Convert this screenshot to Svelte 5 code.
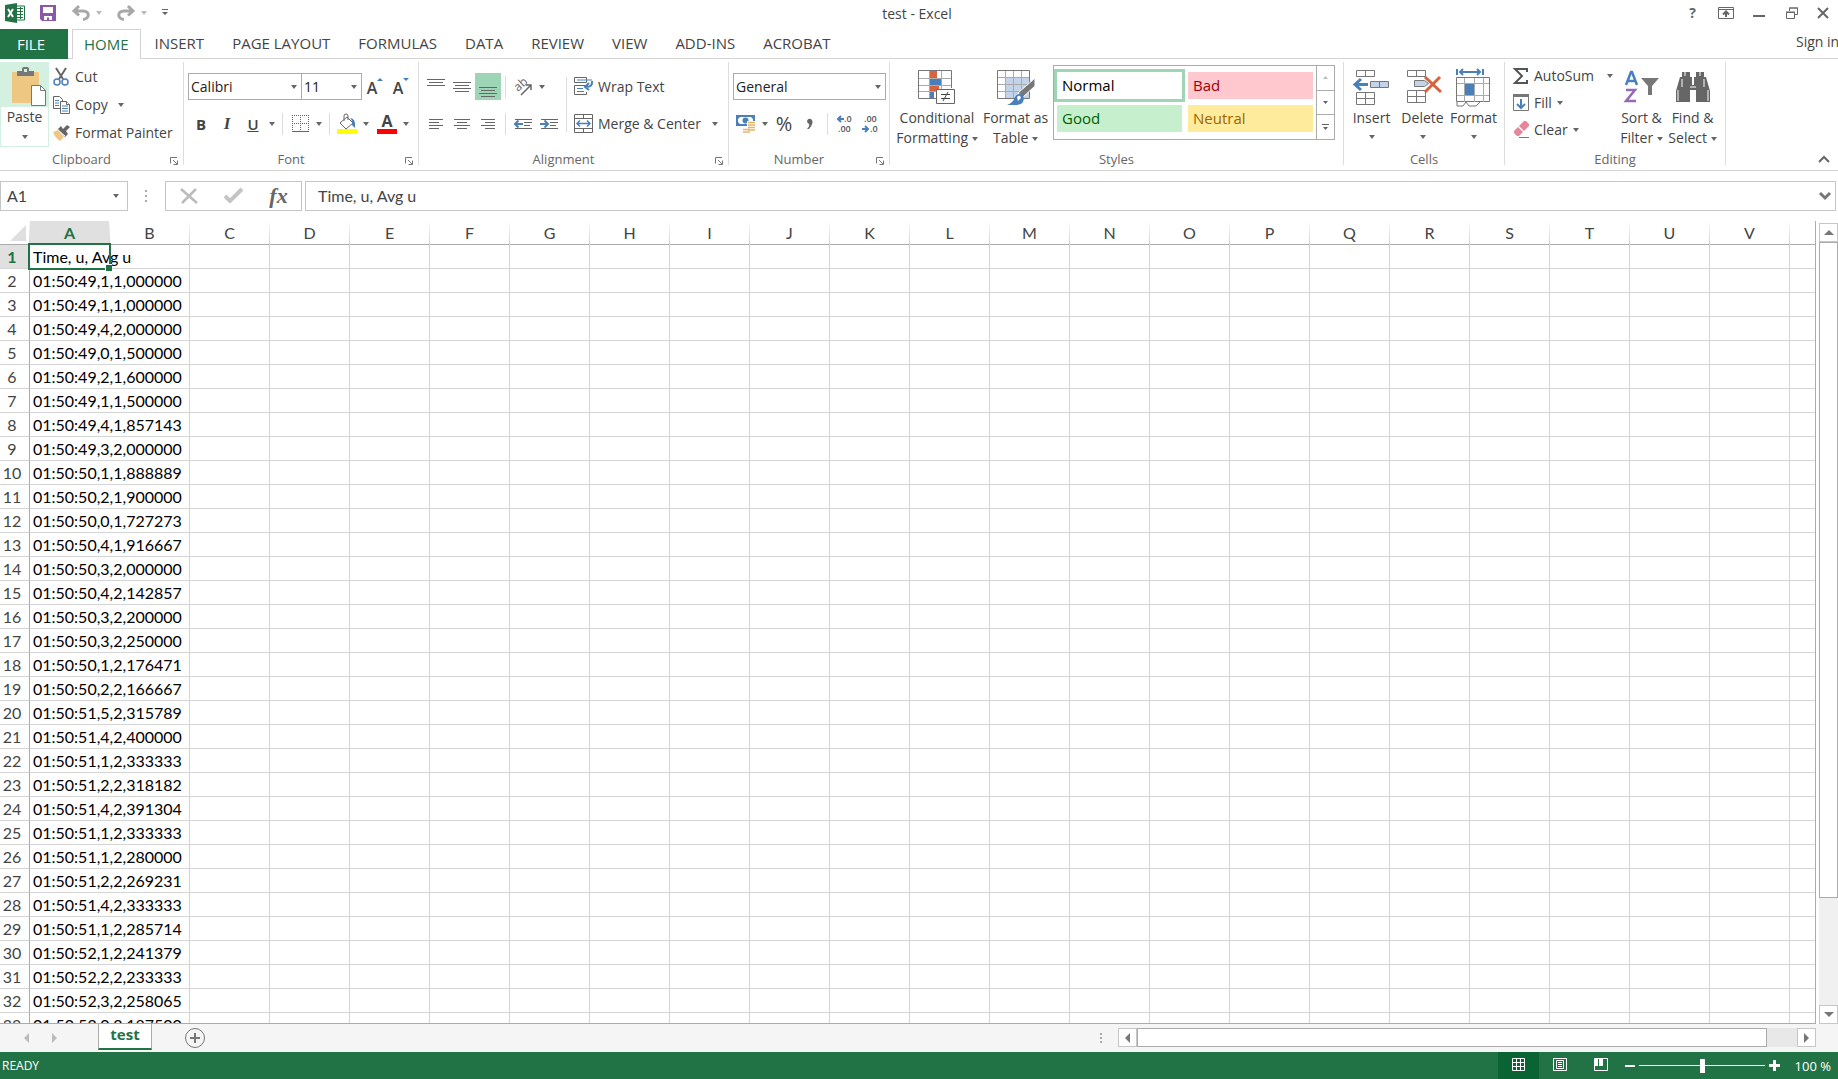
<script>
  const tabs = ['INSERT', 'PAGE LAYOUT', 'FORMULAS', 'DATA', 'REVIEW', 'VIEW', 'ADD-INS', 'ACROBAT'];

  const columns = 'ABCDEFGHIJKLMNOPQRSTUV'.split('');

  const rows = [
    'Time, u, Avg u',
    '01:50:49,1,1,000000',
    '01:50:49,1,1,000000',
    '01:50:49,4,2,000000',
    '01:50:49,0,1,500000',
    '01:50:49,2,1,600000',
    '01:50:49,1,1,500000',
    '01:50:49,4,1,857143',
    '01:50:49,3,2,000000',
    '01:50:50,1,1,888889',
    '01:50:50,2,1,900000',
    '01:50:50,0,1,727273',
    '01:50:50,4,1,916667',
    '01:50:50,3,2,000000',
    '01:50:50,4,2,142857',
    '01:50:50,3,2,200000',
    '01:50:50,3,2,250000',
    '01:50:50,1,2,176471',
    '01:50:50,2,2,166667',
    '01:50:51,5,2,315789',
    '01:50:51,4,2,400000',
    '01:50:51,1,2,333333',
    '01:50:51,2,2,318182',
    '01:50:51,4,2,391304',
    '01:50:51,1,2,333333',
    '01:50:51,1,2,280000',
    '01:50:51,2,2,269231',
    '01:50:51,4,2,333333',
    '01:50:51,1,2,285714',
    '01:50:52,1,2,241379',
    '01:50:52,2,2,233333',
    '01:50:52,3,2,258065',
    '01:50:52,0,2,187500'
  ];

  const cellStyles = ['Normal', 'Bad', 'Good', 'Neutral'];

  let formula = $state(rows[0]);
  let zoom = $state(50);
</script>

<svelte:head>
  <title>test - Excel</title>
</svelte:head>

{#snippet caret()}
  <svg class="caret" width="6" height="4" viewBox="0 0 6 4"><path d="M0 0h6L3 4z" fill="currentColor" /></svg>
{/snippet}

{#snippet launcher(name)}
  <button class="launcher" aria-label="{name} settings">
    <svg width="8" height="8" viewBox="0 0 8 8" fill="none" stroke="#777"><path d="M.5 6.500V.5H7M3 3l4 4M7.500 3.500v4h-4" /></svg>
  </button>
{/snippet}

{#snippet lines(widths, align)}
  <svg width="18" height="18" viewBox="0 0 18 18" stroke="#666">
    {#each widths as w, i}
      {@const x = align === 'left' ? 2 : align === 'right' ? 16 - w : 9 - w / 2}
      <path d="M{x} {4.5 + i * 3}h{w}" />
    {/each}
  </svg>
{/snippet}

<div class="app">
  <header class="titlebar">
    <div class="quick">
      <svg width="20" height="20" viewBox="0 0 20 20">
        <path d="M11 3h8.500v14H11z" fill="#fff" stroke="#217346" />
        <path d="M12 5.500h6M12 8.500h6M12 11.500h6M12 14.500h6M15.500 4v12" stroke="#217346" />
        <path d="M0 2l12-2v20L0 18z" fill="#217346" />
        <path d="M3 6l5 8M8 6l-5 8" stroke="#fff" stroke-width="2" />
      </svg>
      <button class="qbtn save" aria-label="Save">
        <svg width="16" height="16" viewBox="0 0 16 16"><path d="M0 0h16v16H2l-2-2z" fill="#8a57ab" /><path d="M3 2h10v6H3zM4 11h8v4H9v-2.500H7V15H4z" fill="#fff" /></svg>
      </button>
      <button class="qbtn undo" aria-label="Undo">
        <svg width="18" height="16" viewBox="0 0 18 16" fill="none" stroke="#a8a8a8" stroke-width="3"><path d="M7 1L2 6l5 4.500M2 6h9c7 0 7 8 0 8.500" /></svg>
        {@render caret()}
      </button>
      <button class="qbtn redo" aria-label="Redo">
        <svg width="18" height="16" viewBox="0 0 18 16" fill="none" stroke="#a8a8a8" stroke-width="3"><path d="M11 1l5 5-5 4.500M16 6H7c-7 0-7 8 0 8.500" /></svg>
        {@render caret()}
      </button>
      <button class="qbtn customize" aria-label="Customize Quick Access Toolbar">
        <svg width="6" height="7" viewBox="0 0 6 7"><path d="M0 0h6v1H0zM0 3h6L3 6z" fill="#666" /></svg>
      </button>
    </div>
    <h1>test - Excel</h1>
    <div class="window-buttons">
      <button aria-label="Help"><b>?</b></button>
      <button aria-label="Ribbon Display Options">
        <svg width="16" height="12" viewBox="0 0 16 12" fill="none" stroke="#666"><path d="M.5.5h15v11H.5zM0 2.500h16" /><path d="M8 10V5M5 7.500L8 4.500l3 3" stroke-width="2" /></svg>
      </button>
      <button aria-label="Minimize"><svg width="12" height="12" viewBox="0 0 12 12"><path d="M0 8h12v2H0z" fill="#666" /></svg></button>
      <button aria-label="Restore">
        <svg width="12" height="12" viewBox="0 0 12 12" fill="none" stroke="#666"><path d="M.5 5.500h8v6h-8zM0 5h9M3.500 4V1h8v6.500H9M3 1h9" /></svg>
      </button>
      <button aria-label="Close"><svg width="12" height="12" viewBox="0 0 12 12" stroke="#666" stroke-width="2"><path d="M1 1l10 10M11 1L1 11" /></svg></button>
    </div>
  </header>

  <nav class="tabs">
    <button class="file">FILE</button>
    <button class="tab active">HOME</button>
    {#each tabs as tab}
      <button class="tab">{tab}</button>
    {/each}
    <a class="signin" href="#signin">Sign in</a>
  </nav>

  <section class="ribbon">
    <div class="group clipboard">
      <div class="body">
        <button class="paste">
          <span class="paste-icon">
            <svg width="36" height="40" viewBox="0 0 36 40">
              <path d="M2 5h27v31H2z" fill="#eec883" />
              <path d="M7 9V4h5V1.500Q12 0 14 0h3q2 0 2 1.500V4h5v5zM14 2v3h3V2z" fill="#777" fill-rule="evenodd" />
              <path d="M21.500 18.500h9l5 5v15h-14z" fill="#fff" stroke="#777" /><path d="M30.500 18.500v5h5" fill="none" stroke="#777" />
            </svg>
          </span>
          <span>Paste</span>
          {@render caret()}
        </button>
        <div class="stack">
          <button class="line">
            <svg width="17" height="18" viewBox="0 0 17 18" fill="none">
              <path d="M3 0l7 11M13 0L6 11" stroke="#666" stroke-width="2" />
              <circle cx="4" cy="14" r="3" stroke="#4a80ba" stroke-width="1.500" /><circle cx="12" cy="14" r="3" stroke="#4a80ba" stroke-width="1.500" />
            </svg>
            Cut
          </button>
          <button class="line">
            <svg width="17" height="18" viewBox="0 0 17 18" fill="#fff" stroke="#666">
              <path d="M.5.5h6l3 3v9h-9z" /><path d="M2 4.500h4M2 7h4M2 9.500h4" stroke="#4a80ba" />
              <path d="M7.500 5.500h6l3 3v9h-9z" /><path d="M13.500 5.500v3h3" /><path d="M9 10h6M9 12.500h6M9 15h6" stroke="#4a80ba" />
            </svg>
            Copy {@render caret()}
          </button>
          <button class="line">
            <svg width="17" height="16" viewBox="0 0 17 16"><path d="M0 7l5-2 6 7-4 4Q2 13 0 7z" fill="#eec883" /><path d="M5 4l3-3 2 3 4-4 3 2-4 4 2 3-3 3z" fill="#666" /><path d="M6 6l6 5" stroke="#fff" /></svg>
            Format Painter
          </button>
        </div>
      </div>
      <footer class="launch">Clipboard {@render launcher('Clipboard')}</footer>
    </div>

    <div class="group font">
      <div class="body rows">
        <div class="row">
          <label class="combo family"><select aria-label="Font"><option>Calibri</option></select>{@render caret()}</label>
          <label class="combo size"><select aria-label="Font Size"><option>11</option></select>{@render caret()}</label>
          <button class="tool" aria-label="Increase Font Size"><span class="grow">A</span><svg width="6" height="18" viewBox="0 0 6 18"><path d="M0 3h6L3 0z" fill="#4a80ba" /></svg></button>
          <button class="tool" aria-label="Decrease Font Size"><span class="grow">A</span><svg width="6" height="18" viewBox="0 0 6 18"><path d="M0 0h6L3 3z" fill="#4a80ba" /></svg></button>
        </div>
        <div class="row">
          <button class="tool"><b>B</b></button>
          <button class="tool"><i>I</i></button>
          <button class="tool"><u>U</u></button>
          <button class="drop" aria-label="Underline options">{@render caret()}</button>
          <hr />
          <button class="tool" aria-label="Borders">
            <svg width="17" height="17" viewBox="0 0 17 17" fill="none" stroke="#666"><path d="M.5 0v15M8.500 0v15M16.500 0v15M0 .5h17M0 8.500h17" stroke-dasharray="1 1" /><path d="M0 16.500h17" /></svg>
          </button>
          <button class="drop" aria-label="Border options">{@render caret()}</button>
          <hr />
          <button class="tool" aria-label="Fill Color">
            <svg width="20" height="20" viewBox="0 0 20 20" fill="none"><path d="M0 15h20v5H0z" fill="#ff0" /><path d="M3 9l7-6 6 6-7 6zM7 7V2q0-2 2-2t2 2v4" stroke="#666" /><path d="M13 4q6 0 5 10l-3-3q1-4-2-7z" fill="#4a80ba" /></svg>
          </button>
          <button class="drop fill-drop" aria-label="Fill color options">{@render caret()}</button>
          <button class="tool color" aria-label="Font Color"><b>A</b></button>
          <button class="drop" aria-label="Font color options">{@render caret()}</button>
        </div>
      </div>
      <footer class="launch">Font {@render launcher('Font')}</footer>
    </div>

    <div class="group alignment">
      <div class="body">
        <div class="rows left">
          <div class="row">
            <button class="tool up" aria-label="Top Align">{@render lines([18, 14, 18], 'center')}</button>
            <button class="tool" aria-label="Middle Align">{@render lines([18, 14, 18, 14], 'center')}</button>
            <button class="tool down pressed" aria-label="Bottom Align">{@render lines([18, 14, 18, 14], 'center')}</button>
            <hr />
            <button class="tool" aria-label="Orientation">
              <svg width="20" height="18" viewBox="0 0 20 18" fill="none" stroke="#666" stroke-width="1.500">
                <text x="0" y="0" transform="translate(5 14) rotate(-42)" font-size="12" fill="#666" stroke="none">ab</text>
                <path d="M8 17L18 7M13 7h5v5" />
              </svg>
            </button>
            <button class="drop" aria-label="Orientation options">{@render caret()}</button>
          </div>
          <div class="row">
            <button class="tool" aria-label="Align Left">{@render lines([14, 10, 14, 10], 'left')}</button>
            <button class="tool" aria-label="Center">{@render lines([16, 10, 16, 10], 'center')}</button>
            <button class="tool" aria-label="Align Right">{@render lines([14, 10, 14, 10], 'right')}</button>
            <hr />
            <button class="tool" aria-label="Decrease Indent">
              <svg width="18" height="12" viewBox="0 0 18 12" fill="none"><path d="M1 1.500h17M10 4.500h8M10 7.500h6M1 10.500h17" stroke="#666" /><path d="M9 6H1M4.500 2.500L1 6l3.500 3.500" stroke="#4a80ba" stroke-width="2" /></svg>
            </button>
            <button class="tool" aria-label="Increase Indent">
              <svg width="18" height="12" viewBox="0 0 18 12" fill="none"><path d="M1 1.500h17M10 4.500h8M10 7.500h6M1 10.500h17" stroke="#666" /><path d="M0 6h8M4.500 2.500L8 6 4.500 9.500" stroke="#4a80ba" stroke-width="2" /></svg>
            </button>
          </div>
        </div>
        <hr class="tall" />
        <div class="rows">
          <button class="line">
            <svg width="20" height="19" viewBox="0 0 20 19" fill="none" stroke="#666">
              <path d="M.5.5h12v5H.5zM12 8.500H.5v9h12V15" /><path d="M3 3h15M3 11.500h6M3 14.500h7" stroke="#4a80ba" /><path d="M18 4q1 6-6 6M15 6l-4 4 4 3" stroke="#4a80ba" stroke-width="2" />
            </svg>
            Wrap Text
          </button>
          <button class="line">
            <svg width="20" height="19" viewBox="0 0 20 19" fill="none" stroke="#666">
              <path d="M.5.5h18v18H.5zM0 4.500h19M0 14.500h19M9.500 0v4M9.500 15v4" /><path d="M3 9.500h13M6 6.500l-3 3 3 3M13 6.500l3 3-3 3" stroke="#4a80ba" stroke-width="1.500" />
            </svg>
            Merge &amp; Center {@render caret()}
          </button>
        </div>
      </div>
      <footer class="launch">Alignment {@render launcher('Alignment')}</footer>
    </div>

    <div class="group number">
      <div class="body rows">
        <div class="row">
          <label class="combo format"><select aria-label="Number Format"><option>General</option></select>{@render caret()}</label>
        </div>
        <div class="row">
          <button class="tool" aria-label="Accounting Number Format">
            <svg width="20" height="20" viewBox="0 0 20 20" fill="none">
              <path d="M0 1h19v11H0z" fill="#4a80ba" /><path d="M4 3h11l2 2v3l-2 2H4L2 8V5z" fill="#fff" /><circle cx="9.500" cy="6.500" r="3" fill="#4a80ba" />
              <path d="M11 7h9v12h-5v1H6v-6h5z" fill="#fff" /><path d="M12 8.500h7M12 11h7M12 13.500h7M12 16h7M7 15.500h7M7 18h7" stroke="#e5b566" stroke-width="1.500" />
            </svg>
          </button>
          <button class="drop" aria-label="Accounting options">{@render caret()}</button>
          <button class="tool percent">%</button>
          <button class="tool comma" aria-label="Comma Style">
            <svg width="6" height="10" viewBox="0 0 6 10"><path d="M0 2Q1-1 4 0q4 3-2 10H0q3-3 2-5-2-1-2-3z" fill="#666" /></svg>
          </button>
          <hr />
          <button class="tool" aria-label="Increase Decimal">
            <svg width="18" height="20" viewBox="0 0 18 20" font-size="9" font-weight="600" fill="#555"><text x="8" y="8">.0</text><text x="2" y="18">.00</text><path d="M8 5H2M5 2L2 5l3 3" fill="none" stroke="#4a80ba" stroke-width="2" /></svg>
          </button>
          <button class="tool" aria-label="Decrease Decimal">
            <svg width="18" height="20" viewBox="0 0 18 20" font-size="9" font-weight="600" fill="#555"><text x="2" y="8">.00</text><text x="8" y="18">.0</text><path d="M0 15h6M3 12l3 3-3 3" fill="none" stroke="#4a80ba" stroke-width="2" /></svg>
          </button>
        </div>
      </div>
      <footer class="launch">Number {@render launcher('Number')}</footer>
    </div>

    <div class="group styles">
      <div class="body">
        <button class="big wide">
          <svg width="38" height="36" viewBox="0 0 38 36" fill="none">
            <path d="M11 1h8v7h-8zM11 15h10v6H11z" fill="#d9623e" /><path d="M11 8h12v7H11zM11 21h5v7h-5z" fill="#4a80ba" />
            <path d="M1 8.500h33M1 15.500h33M1 21.500h18M11.500 1v27M23.500 1v18" stroke="#aaa" /><path d="M18 28.500H.5V.5h33V18" stroke="#777" />
            <path d="M18.500 19.500h18v14h-18z" fill="#fff" stroke="#666" /><path d="M23 24.500h9M23 28.500h9M30 22l-5 9" stroke="#444" />
          </svg>
          <span>Conditional<br />Formatting {@render caret()}</span>
        </button>
        <button class="big medium">
          <svg width="38" height="36" viewBox="0 0 38 36" fill="none">
            <path d="M9 7h24v21H9z" fill="#c3d4ea" /><path d="M1 7.500h32M1 14.500h32M1 21.500h32M8.500 1v27M16.500 1v27M24.500 1v27" stroke="#aaa" /><path d="M.5.5h32v28H.5z" stroke="#777" />
            <path d="M38 8v8L26 27l-5-4z" fill="#777" stroke="#fff" /><path d="M10 35q6-2 8-8 3-5 8-2 3 9-6 10z" fill="#4a80ba" /><path d="M20 27q3-3 4 1l-3 3z" fill="#fff" />
          </svg>
          <span>Format as<br />Table {@render caret()}</span>
        </button>
        <div class="gallery">
          <div class="swatches">
            {#each cellStyles as style}
              <button class="swatch {style.toLowerCase()}">{style}</button>
            {/each}
          </div>
          <div class="spin">
            <button class="off" aria-label="Previous styles"><svg width="5" height="3" viewBox="0 0 5 3"><path d="M0 3h5L2.500 0z" fill="#bbb" /></svg></button>
            <button aria-label="Next styles"><svg width="5" height="3" viewBox="0 0 5 3"><path d="M0 0h5L2.500 3z" fill="#666" /></svg></button>
            <button aria-label="More styles"><svg width="7" height="7" viewBox="0 0 7 7"><path d="M0 0h7v1H0zM1 3h5L3.500 6z" fill="#666" /></svg></button>
          </div>
        </div>
      </div>
      <footer>Styles</footer>
    </div>

    <div class="group cells">
      <div class="body">
        <button class="big">
          <svg width="38" height="36" viewBox="0 0 38 36" fill="none" stroke="#777">
            <path d="M3.500.5h18v6h-18zM12.500 0v7M3.500 22.500h18v12h-18zM3 28.500h19M12.500 22v13" /><path d="M17.500 11.500h18v6h-18z" fill="#c3d4ea" /><path d="M26.500 11v7" />
            <path d="M15 14.500H2M8 9l-6 5.500L8 20" stroke="#4a80ba" stroke-width="3" />
          </svg>
          <span>Insert</span>
          {@render caret()}
        </button>
        <button class="big">
          <svg width="38" height="36" viewBox="0 0 38 36" fill="none" stroke="#777">
            <path d="M3.500.5h18v6h-18zM12.500 0v7M3.500 20.500h18v12h-18zM3 26.500h19M12.500 20v13" /><path d="M10.500 10.500h10l4 3-4 3h-10z" fill="#c3d4ea" />
            <path d="M21 7l16 15M36 7L21 22" stroke="#d9623e" stroke-width="3" />
          </svg>
          <span>Delete</span>
          {@render caret()}
        </button>
        <button class="big">
          <svg width="36" height="38" viewBox="0 0 36 38" fill="none" stroke="#777">
            <path d="M.5 8.500h33v24H.5zM1 33v4h6l3-4 3 4h7l4-4" /><path d="M1 14.500h32M1 26.500h32M8.500 9v24M18.500 9v24M27.500 9v24" stroke="#aaa" /><path d="M9 15h9v11H9z" fill="#4a80ba" stroke="none" />
            <path d="M1 0v6M27 0v6M4 3h20M7 0L4 3l3 3M21 0l3 3-3 3" stroke="#4a80ba" stroke-width="2" />
          </svg>
          <span>Format</span>
          {@render caret()}
        </button>
      </div>
      <footer>Cells</footer>
    </div>

    <div class="group editing">
      <div class="body">
        <div class="stack">
          <button class="line sum">
            <svg width="16" height="16" viewBox="0 0 16 16" fill="none" stroke="#555" stroke-width="2"><path d="M14 4V1H2l7 7-7 7h12v-3" /></svg>
            AutoSum {@render caret()}
          </button>
          <button class="line">
            <svg width="16" height="17" viewBox="0 0 16 17" fill="none"><path d="M.5.5h15v16H.5z" stroke="#777" /><path d="M0 0h16v3H0z" fill="#777" /><path d="M8 5v9M4 10l4 4 4-4" stroke="#4a80ba" stroke-width="2" /></svg>
            Fill {@render caret()}
          </button>
          <button class="line">
            <svg width="16" height="17" viewBox="0 0 16 17"><path d="M6 5l5-5h2l3 3v2l-5 5z" fill="#e5869a" /><path d="M5 6l5 5-4 4H4l-3-3v-2z" fill="#e5869a" /><path d="M6 16.500h10" stroke="#777" /></svg>
            Clear {@render caret()}
          </button>
        </div>
        <button class="big">
          <svg width="36" height="36" viewBox="0 0 36 36" fill="none">
            <path d="M2 15L7 2h1l5 13M4 11h7" stroke="#4a80ba" stroke-width="2.500" /><path d="M2 20h9L2 31h10" stroke="#9668b8" stroke-width="2.500" />
            <path d="M17 8h18l-7 8v9h-4v-9z" fill="#777" />
          </svg>
          <span>Sort &amp;<br />Filter {@render caret()}</span>
        </button>
        <button class="big">
          <svg width="36" height="36" viewBox="0 0 36 36">
            <path d="M7 2h8v5h2v8h2V7h2V2h8v5h2l4 14v11H21V20h-6v12H1V21L5 7h2z" fill="#666" /><path d="M10 2v4M25 2v4M7 9v8M29 9v8M3 20v11M33 20v11M15 17h6" stroke="#fff" />
          </svg>
          <span>Find &amp;<br />Select {@render caret()}</span>
        </button>
      </div>
      <footer>Editing</footer>
    </div>

    <button class="collapse" aria-label="Collapse the Ribbon">
      <svg width="12" height="8" viewBox="0 0 12 8" fill="none" stroke="#666" stroke-width="2"><path d="M1 7l5-5 5 5" /></svg>
    </button>
  </section>

  <div class="formulabar">
    <label class="namebox"><input value="A1" aria-label="Name Box" />{@render caret()}</label>
    <svg class="dots" width="2" height="12" viewBox="0 0 2 12" fill="#aaa"><path d="M0 0h2v2H0zM0 5h2v2H0zM0 10h2v2H0z" /></svg>
    <div class="fx">
      <button aria-label="Cancel"><svg width="18" height="16" viewBox="0 0 18 16" stroke="#bbb" stroke-width="2.500"><path d="M1 1l16 14M16 1L2 15" /></svg></button>
      <button aria-label="Enter"><svg width="19" height="16" viewBox="0 0 19 16" fill="none" stroke="#c4c4c4" stroke-width="4"><path d="M1 8l5 5L18 1" /></svg></button>
      <button class="fn">fx</button>
    </div>
    <label class="formula">
      <input bind:value={formula} aria-label="Formula Bar" />
      <svg width="12" height="9" viewBox="0 0 12 9" fill="none" stroke="#777" stroke-width="3"><path d="M1 2l5 5 5-5" /></svg>
    </label>
  </div>

  <main>
    <div class="grid">
      <table>
        <colgroup>
          <col class="numbers" />
          {#each columns as _}<col class="column" />{/each}
          <col />
        </colgroup>
        <thead>
          <tr>
            <th class="corner" aria-label="Select All"><svg width="16" height="16" viewBox="0 0 16 16"><path d="M16 0v16H0z" fill="#dfdfdf" /></svg></th>
            {#each columns as column, c}
              <th class:current={c === 0}>{column}</th>
            {/each}
            <th></th>
          </tr>
        </thead>
        <tbody>
          {#each rows as value, r}
            <tr>
              <th class:current={r === 0}>{r + 1}</th>
              <td class="filled">{value}{#if r === 0}<span class="cursor"></span>{/if}</td>
              {#each columns as _}<td></td>{/each}
            </tr>
          {/each}
        </tbody>
      </table>
    </div>
    <div class="vscroll">
      <button aria-label="Scroll up"><svg width="10" height="5" viewBox="0 0 10 5"><path d="M0 5h10L5 0z" fill="#777" /></svg></button>
      <div class="track"><div class="thumb"></div></div>
      <button aria-label="Scroll down"><svg width="10" height="5" viewBox="0 0 10 5"><path d="M0 0h10L5 5z" fill="#777" /></svg></button>
    </div>
  </main>

  <div class="sheetbar">
    <button class="nav" aria-label="Previous sheet"><svg width="5" height="10" viewBox="0 0 5 10"><path d="M5 0v10L0 5z" fill="#bbb" /></svg></button>
    <button class="nav" aria-label="Next sheet"><svg width="5" height="10" viewBox="0 0 5 10"><path d="M0 0v10l5-5z" fill="#bbb" /></svg></button>
    <button class="sheet">test</button>
    <button class="add" aria-label="New sheet">
      <svg width="20" height="20" viewBox="0 0 20 20" fill="none" stroke="#777"><circle cx="10" cy="10" r="9.500" /><path d="M10 5v10M5 10h10" stroke-width="2" /></svg>
    </button>
    <svg class="dots" width="2" height="10" viewBox="0 0 2 10" fill="#aaa"><path d="M0 0h2v2H0zM0 4h2v2H0zM0 8h2v2H0z" /></svg>
    <div class="hscroll">
      <button aria-label="Scroll left"><svg width="5" height="10" viewBox="0 0 5 10"><path d="M5 0v10L0 5z" fill="#777" /></svg></button>
      <div class="track"><div class="thumb"></div></div>
      <button aria-label="Scroll right"><svg width="5" height="10" viewBox="0 0 5 10"><path d="M0 0v10l5-5z" fill="#777" /></svg></button>
    </div>
  </div>

  <footer class="statusbar">
    <span class="ready">READY</span>
    <button class="view on" aria-label="Normal"><svg width="13" height="13" viewBox="0 0 13 13" fill="none" stroke="#fff"><path d="M.5.5h12v12H.5zM4.500 0v13M8.500 0v13M0 4.500h13M0 8.500h13" /></svg></button>
    <button class="view" aria-label="Page Layout"><svg width="14" height="13" viewBox="0 0 14 13" fill="none" stroke="#fff"><path d="M.5.5h13v12H.5zM3.500 2.500h7v8h-7zM5 4.500h4M5 6.500h4M5 8.500h4" /></svg></button>
    <button class="view" aria-label="Page Break Preview"><svg width="14" height="13" viewBox="0 0 14 13" fill="none" stroke="#fff"><path d="M.5.5h13v12H.5z" /><path d="M1 1h3v7H1zM5 1h4v7H5z" fill="#fff" stroke="none" /></svg></button>
    <button class="step" aria-label="Zoom Out"><svg width="10" height="10" viewBox="0 0 10 10"><path d="M0 4h10v2H0z" fill="#fff" /></svg></button>
    <input class="zoom" type="range" min="0" max="100" bind:value={zoom} aria-label="Zoom" />
    <button class="step" aria-label="Zoom In"><svg width="11" height="11" viewBox="0 0 11 11"><path d="M0 4h4V0h3v4h4v3H7v4H4V7H0z" fill="#fff" /></svg></button>
    <span class="percentage">100 %</span>
  </footer>
</div>

<style>
  :global(body) {
    margin: 0;
    overflow: hidden;
  }

  .app {
    display: flex;
    flex-direction: column;
    height: 100vh;
    overflow: hidden;
    background: #fff;
    color: #444;
    font-family: "Open Sans", "Noto Sans", sans-serif;
    font-size: 14px;
    line-height: 20px;
  }

  .app * {
    box-sizing: border-box;
  }

  svg {
    display: block;
    flex: none;
    overflow: visible;
  }

  button,
  input,
  select {
    margin: 0;
    padding: 0;
    border: 0;
    background: none;
    color: inherit;
    font: inherit;
  }

  button {
    display: flex;
    align-items: center;
    justify-content: center;
    white-space: nowrap;
  }

  hr {
    width: 1px;
    height: 22px;
    margin: 0 4px;
    border: 0;
    background: #ddd;
  }

  .caret {
    color: #666;
  }

  /* title bar */
  .titlebar {
    display: grid;
    grid-template-columns: 1fr auto 1fr;
    height: 29px;
    flex: none;
  }

  .quick {
    display: flex;
    align-items: center;
    padding: 0 0 4px 5px;
  }

  .qbtn {
    gap: 6px;
  }

  .qbtn .caret {
    color: #bbb;
  }

  .save {
    margin: 0 16px 0 15px;
  }

  .redo {
    margin-left: 15px;
  }

  .customize {
    margin-left: 15px;
  }

  h1 {
    margin: 0;
    padding-right: 4px;
    font-size: 14px;
    font-weight: 400;
    line-height: 28px;
  }

  .window-buttons {
    display: flex;
    justify-content: flex-end;
    padding-bottom: 3px;
  }

  .window-buttons button {
    width: 33px;
    color: #666;
  }

  .window-buttons button:last-child {
    width: 30px;
  }

  /* tabs */
  .tabs {
    display: flex;
    height: 30px;
    flex: none;
    border-bottom: 1px solid #d4d4d4;
    font-size: 15px;
  }

  .file {
    width: 68px;
    height: 30px;
    margin-right: 4px;
    padding-right: 6px;
    background: #217346;
    color: #fff;
  }

  .tab {
    padding: 0 14px 2px;
  }

  .tab.active {
    height: 30px;
    padding: 0 11px 2px;
    border: 1px solid #d4d4d4;
    border-bottom: 0;
    background: #fff;
    color: #217346;
  }

  .signin {
    width: 42px;
    margin-left: auto;
    overflow: hidden;
    color: #444;
    font-size: 14px;
    line-height: 26px;
    text-decoration: none;
    white-space: nowrap;
  }

  /* ribbon */
  .ribbon {
    display: flex;
    height: 112px;
    flex: none;
    padding: 3px 0 5px;
    border-bottom: 1px solid #d4d4d4;
  }

  .group {
    display: flex;
    flex-direction: column;
    border-right: 1px solid #ddd;
  }

  .body {
    display: flex;
    flex: 1;
  }

  .group footer {
    position: relative;
    height: 12px;
    flex: none;
    color: #666;
    font-size: 13px;
    line-height: 12px;
    text-align: center;
  }

  .group footer.launch {
    padding-right: 20px;
  }

  .launcher {
    position: absolute;
    right: 5px;
    bottom: 0;
  }

  .stack {
    display: flex;
    flex-direction: column;
  }

  .clipboard .stack {
    padding-top: 1px;
  }

  .line {
    gap: 5px;
    height: 28px;
    justify-content: flex-start;
  }

  .line .caret {
    margin-left: 5px;
  }

  .rows {
    display: flex;
    flex-direction: column;
    gap: 10px;
    padding-top: 11px;
  }

  .row {
    display: flex;
    align-items: center;
    height: 27px;
  }

  .tool {
    width: 26px;
    height: 27px;
    font-size: 15px;
  }

  .drop {
    width: 12px;
    height: 27px;
  }

  .clipboard {
    width: 184px;
  }

  .paste {
    flex-direction: column;
    justify-content: flex-start;
    width: 49px;
    height: 85px;
    margin-right: 4px;
    border: 1px solid #d3f0e0;
  }

  .paste-icon {
    display: flex;
    justify-content: center;
    width: 48px;
    height: 44px;
    padding: 4px 0 0 6px;
    background: #d3f0e0;
  }

  .paste .caret {
    margin-top: 8px;
  }

  .font {
    width: 235px;
  }

  .font .body {
    padding-left: 4px;
  }

  .combo {
    display: flex;
    align-items: center;
    height: 27px;
    padding-right: 4px;
    border: 1px solid #ababab;
    color: #222;
  }

  .combo select {
    flex: 1;
    min-width: 0;
    padding-left: 2px;
    appearance: none;
  }

  .family {
    width: 114px;
  }

  .size {
    width: 60px;
    border-left: 0;
  }

  .grow {
    padding-top: 2px;
    font-size: 16px;
    font-weight: 600;
    line-height: 20px;
  }

  .tool i {
    font-family: "Liberation Serif", serif;
    font-size: 17px;
    font-weight: 700;
  }

  .tool u {
    font-weight: 600;
  }

  .fill-drop {
    margin-right: 2px;
  }

  .color b {
    width: 20px;
    height: 20px;
    border-bottom: 5px solid #f00;
    font-size: 16px;
    line-height: 14px;
  }

  .alignment {
    width: 310px;
  }

  .alignment .body {
    padding-left: 4px;
  }

  .left {
    width: 143px;
  }

  .up {
    padding-bottom: 6px;
  }

  .down {
    padding-top: 10px;
  }

  .pressed {
    background: #9fd5b7;
  }

  .tall {
    height: 55px;
    margin: 15px 7px 0 0;
  }

  .alignment .line {
    height: 27px;
    gap: 4px;
  }

  .alignment .line .caret {
    margin-left: 7px;
  }

  .number {
    width: 161px;
  }

  .number .body {
    padding-left: 4px;
  }

  .format {
    width: 153px;
  }

  .percent {
    font-size: 20px;
  }

  .styles {
    width: 454px;
  }

  .styles .body {
    padding-left: 6px;
  }

  .big {
    flex-direction: column;
    justify-content: flex-start;
    width: 51px;
    padding-top: 6px;
  }

  .big svg:first-child {
    height: 40px;
  }

  .big span .caret {
    display: inline-block;
    vertical-align: middle;
  }

  .big > .caret {
    margin-top: 7px;
  }

  .wide {
    width: 82px;
  }

  .medium {
    width: 75px;
  }

  .gallery {
    display: flex;
    width: 282px;
    height: 75px;
    margin-top: 3px;
    border: 1px solid #ababab;
  }

  .swatches {
    display: grid;
    grid-template-columns: 125px 125px;
    grid-auto-rows: 27px;
    gap: 6px;
    flex: 1;
    padding: 6px 3px;
  }

  .swatch {
    justify-content: flex-start;
    padding: 0 0 2px 5px;
    color: #000;
    font-size: 15px;
  }

  .normal {
    outline: 3px solid #9fd5b7;
  }

  .bad {
    background: #ffc7ce;
    color: #9c0006;
  }

  .good {
    background: #c6efce;
    color: #006100;
  }

  .neutral {
    background: #ffeb9c;
    color: #9c6500;
  }

  .spin {
    display: flex;
    flex-direction: column;
    width: 18px;
    border-left: 1px solid #ababab;
  }

  .spin button {
    flex: 1;
  }

  .spin button + button {
    border-top: 1px solid #ababab;
  }

  .cells {
    width: 161px;
  }

  .cells .body {
    padding-left: 2px;
  }

  .editing {
    width: 221px;
  }

  .editing .body {
    padding-left: 8px;
  }

  .editing .stack {
    width: 103px;
  }

  .editing .line {
    height: 27px;
  }

  .editing .line .caret {
    margin-left: 0;
  }

  .editing .sum .caret {
    margin-left: 8px;
  }

  .collapse {
    margin: auto 8px 2px auto;
  }

  /* formula bar */
  .formulabar {
    display: flex;
    align-items: center;
    height: 50px;
    flex: none;
    padding: 0 2px 0 0;
  }

  .namebox,
  .fx,
  .formula {
    display: flex;
    align-items: center;
    height: 30px;
    margin-bottom: 1px;
    border: 1px solid #c6c6c6;
  }

  .namebox {
    width: 128px;
    padding: 0 8px 0 6px;
  }

  .namebox input,
  .formula input {
    flex: 1;
    min-width: 0;
    outline: 0;
  }

  .formulabar .dots {
    margin: 0 18px 0 17px;
  }

  .fx {
    width: 137px;
    margin-right: 3px;
  }

  .fx button {
    flex: 1;
  }

  .fn {
    color: #666;
    font-family: "Liberation Serif", serif;
    font-size: 22px;
    font-style: italic;
    font-weight: 700;
  }

  .formula {
    flex: 1;
    padding: 0 4px 0 12px;
  }

  .namebox input,
  .formula input,
  .grid {
    font-family: Lato, "Open Sans", sans-serif;
    font-size: 16px;
  }

  /* sheet */
  main {
    display: flex;
    flex: 1;
    min-height: 0;
  }

  .grid {
    flex: 1;
    overflow: hidden;
    border-right: 1px solid #ababab;
    border-bottom: 1px solid #ababab;
    line-height: 20px;
  }

  table {
    width: 100%;
    border-spacing: 0;
    table-layout: fixed;
  }

  .numbers {
    width: 30px;
  }

  .column {
    width: 80px;
  }

  th,
  td {
    height: 24px;
    padding: 0;
    border-right: 1px solid #d4d4d4;
    border-bottom: 1px solid #d4d4d4;
  }

  th {
    font-weight: 400;
  }

  thead th {
    border-right: 1px solid;
    border-image: linear-gradient(#fff, #ccc) 1;
    border-bottom: 0;
    box-shadow: inset 0 -1px #ababab;
  }

  tbody th {
    padding-right: 5px;
    border-right-color: #ababab;
  }

  th.current {
    background: #e0e0e0;
    color: #217346;
    font-weight: 700;
  }

  .corner svg {
    margin: 0 0 0 10px;
  }

  td:last-child,
  thead th:last-child {
    border-right: 0;
  }

  .filled {
    position: relative;
    padding: 0 0 0 3px;
    border-right: 0;
    color: #000;
    white-space: nowrap;
  }

  .cursor {
    position: absolute;
    inset: -2px -1px -2px -2px;
    border: 2px solid #217346;
  }

  .cursor::after {
    position: absolute;
    right: -3px;
    bottom: -3px;
    width: 6px;
    height: 6px;
    border: 1px solid #fff;
    border-width: 1px 0 0 1px;
    background: #217346;
    content: "";
  }

  .vscroll {
    display: flex;
    flex-direction: column;
    width: 22px;
    padding: 2px 0 0 3px;
  }

  .vscroll button,
  .hscroll button {
    width: 19px;
    height: 19px;
    border: 1px solid #c6c6c6;
    background: #fff;
  }

  .vscroll .track {
    flex: 1;
    background: #f0f0f0;
  }

  .vscroll .thumb {
    height: 86%;
    border: 1px solid #ababab;
    background: #fff;
  }

  /* sheet tabs */
  .sheetbar {
    display: flex;
    align-items: center;
    height: 28px;
    flex: none;
    padding: 0 22px 1px 0;
    background: #f5f5f5;
  }

  .nav {
    width: 28px;
  }

  .nav:first-child {
    margin-left: 12px;
  }

  .sheet {
    width: 54px;
    height: 26px;
    margin: 0 33px 1px 30px;
    padding-bottom: 4px;
    border: 1px solid #ababab;
    border-top: 0;
    border-bottom: 2px solid #217346;
    background: #fff;
    color: #217346;
    font-size: 15px;
    font-weight: 700;
  }

  .sheetbar .dots {
    margin-left: auto;
  }

  .hscroll {
    display: flex;
    width: 698px;
    margin-left: 16px;
  }

  .hscroll .track {
    flex: 1;
    background: #e8e8e8;
  }

  .hscroll .thumb {
    width: 630px;
    height: 19px;
    border: 1px solid #ababab;
    background: #fff;
  }

  /* status bar */
  .statusbar {
    display: flex;
    align-items: center;
    height: 27px;
    flex: none;
    padding-right: 7px;
    background: #217346;
    color: #fff;
    font-size: 12px;
  }

  .ready {
    margin: 0 auto 0 2px;
  }

  .view {
    width: 41px;
    height: 27px;
    padding-bottom: 2px;
  }

  .on {
    background: #0a6332;
  }

  .step {
    width: 18px;
  }

  .zoom {
    width: 126px;
    height: 14px;
    appearance: none;
    background: linear-gradient(#fff, #fff) center / 100% 1px no-repeat;
  }

  .zoom::-webkit-slider-thumb {
    width: 5px;
    height: 14px;
    border-radius: 0;
    appearance: none;
    background: #fff;
  }

  .percentage {
    width: 48px;
    font-size: 13px;
    text-align: right;
  }
</style>
